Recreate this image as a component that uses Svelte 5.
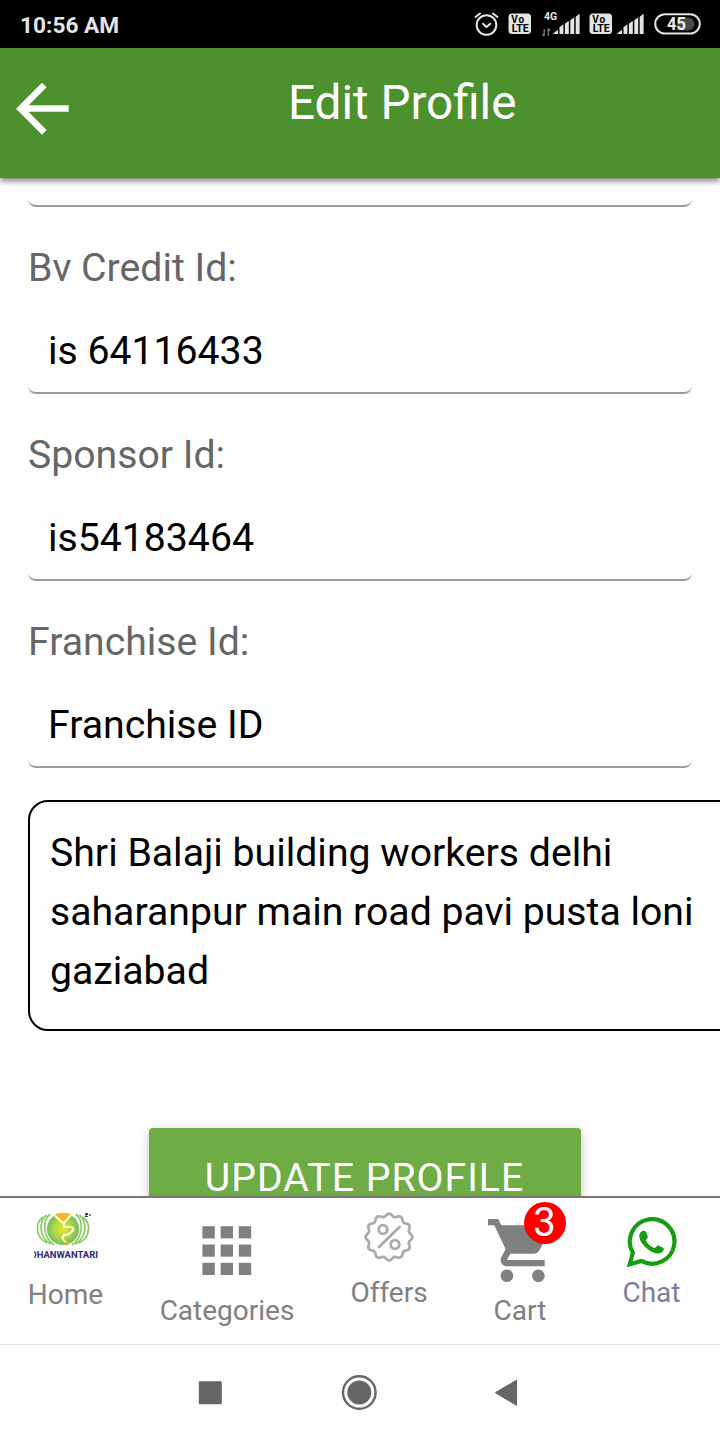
<script>
  let fields = $state([
    { label: 'Bv Credit Id:', value: 'is 64116433' },
    { label: 'Sponsor Id:', value: 'is54183464' },
    { label: 'Franchise Id:', value: 'Franchise ID' },
  ]);

  const address = 'Shri Balaji building workers delhi saharanpur main road pavi pusta loni gaziabad';
  const cartCount = 3;
  const bars = [4, 7.5, 11, 14.5, 18];

  // Wavy outline of the offers badge, twelve lobes
  const badgePath = () => {
    let d = '';
    for (let i = 0; i <= 144; i++) {
      const angle = (i / 144) * Math.PI * 2;
      const r = 22 + 1.4 * Math.cos(12 * angle);
      const x = 25 + r * Math.sin(angle);
      const y = 25 - r * Math.cos(angle);
      d += `${i ? 'L' : 'M'}${x.toFixed(2)} ${y.toFixed(2)}`;
    }
    return d + 'Z';
  };
</script>

{#snippet volte()}
  <svg class="volte" width="24" height="22" viewBox="0 0 24 22">
    <rect x="0.5" y="0.5" width="22.5" height="20.5" rx="3.5" fill="#e4e4e4" />
    <text x="3.2" y="9.7" font-size="10" textLength="13">Vo</text>
    <text x="3.8" y="18.8" font-size="10" textLength="17" lengthAdjust="spacingAndGlyphs">LTE</text>
  </svg>
{/snippet}

{#snippet signal()}
  <svg width="29" height="21" viewBox="0 0 29 21">
    <path d="M0.5 20L6 15.8V20Z" fill="#e4e4e4" />
    {#each bars.slice(1) as h, i}
      <path d="M{7.5 + i * 5.4} {20 - h + 0.8}L{11.4 + i * 5.4} {17.8 - h}V20H{7.5 + i * 5.4}Z" fill="#e4e4e4" />
    {/each}
  </svg>
{/snippet}

<div class="screen">
  <div class="status">
    <span class="time">10:56 AM</span>
    <div class="status-icons">
      <svg width="26" height="26" viewBox="0 0 26 26" fill="none" stroke="#e4e4e4" stroke-width="2" stroke-linecap="round" stroke-linejoin="round">
        <circle cx="12.5" cy="14" r="9.8" />
        <path d="M1.5 6L6 2.500M23.500 6L19 2.500M9 12.700L12.500 15.900L16.300 12.700" />
      </svg>
      {@render volte()}
      <div class="network">
        <svg class="data" width="20" height="28" viewBox="0 0 20 28">
          <text x="2" y="9.5" font-size="10.5" fill="#e4e4e4">4G</text>
          <path d="M2.2 19V25.5M0.5 24L2.2 26M6.4 26V18.5M8 20.5L6.4 18.5" stroke="#777" stroke-width="1.4" fill="none" />
        </svg>
        {@render signal()}
      </div>
      {@render volte()}
      <div class="second">{@render signal()}</div>
      <svg class="battery" width="48" height="24" viewBox="0 0 48 24">
        <path d="M23 5.500H34A6.500 6.500 0 0 1 34 18.500H23Z" fill="#4a4a4a" />
        <rect x="1.200" y="2.200" width="44.600" height="19.400" rx="9.700" fill="none" stroke="#e4e4e4" stroke-width="2" />
        <text x="13" y="18" font-size="17.500" fill="#eee" textLength="19" lengthAdjust="spacingAndGlyphs">45</text>
      </svg>
    </div>
  </div>

  <header>
    <button class="back" aria-label="Back">
      <svg width="54" height="54" viewBox="0 0 54 54" fill="none" stroke="#fff" stroke-width="6.6">
        <path d="M28.3 3L4.6 26.700L28.300 50.400M5 26.500H52.700" />
      </svg>
    </button>
    <h1>Edit Profile</h1>
  </header>

  <main>
    <div class="input previous"></div>
    {#each fields as field}
      <label class="field">
        <span>{field.label}</span>
        <input class="input" type="text" bind:value={field.value} />
      </label>
    {/each}
    <div class="address">{address}</div>
    <button class="update">UPDATE PROFILE</button>
  </main>

  <nav>
    <a class="item home" href="#home">
      <svg width="64" height="54" viewBox="0 0 64 54">
        <defs>
          <radialGradient id="leaf">
            <stop offset="0" stop-color="#e3e52c" />
            <stop offset="0.55" stop-color="#b4d84a" />
            <stop offset="1" stop-color="#6cc05a" />
          </radialGradient>
        </defs>
        <g fill="none" stroke="#8ccb62" stroke-width="1.7">
          <path d="M9 9C1 15 1 29 13 35M12.500 7C4.500 14 5 29 16.500 36M16 6C8 13 9 29 20 37" />
          <path d="M49 9C57 15 57 29 45 35M45.500 7C53.500 14 53 29 41.500 36M42 6C50 13 49 29 38 37" />
        </g>
        <ellipse cx="29" cy="21" rx="16" ry="16" fill="url(#leaf)" />
        <path d="M21 6Q30 3.500 37 6L30 14.500Z" fill="#fbb62d" />
        <path d="M19 6L29.500 15.500L38.500 5.500M30 15.500V19Q41 18 39 22.500Q35 27 30 27Q26 31 33 35" fill="none" stroke="#fbfbd0" stroke-width="2" />
        <circle cx="33" cy="35.500" r="2" fill="#f6ab38" />
        <path d="M51 5.500L54 8.500M54 5.500L51 8.500M52.500 5V9M56 6V8" stroke="#333" stroke-width="1.200" />
        <text x="-3.500" y="49.500" font-size="9.300" font-weight="700" fill="#2f2a7c" textLength="67.500" lengthAdjust="spacingAndGlyphs">DHANWANTARI</text>
      </svg>
      <span>Home</span>
    </a>
    <a class="item categories" href="#categories">
      <svg width="50" height="50" viewBox="0 0 50 50" fill="#808080">
        {#each [0, 1, 2] as row}
          {#each [0, 1, 2] as col}
            <rect x={0.4 + col * 18.2} y={0.2 + row * 18.3} width="12.4" height="12.2" />
          {/each}
        {/each}
      </svg>
      <span>Categories</span>
    </a>
    <a class="item offers" href="#offers">
      <svg width="50" height="50" viewBox="0 0 50 50" fill="none" stroke="#aeaaaa" stroke-width="2.8" stroke-linecap="round">
        <path d={badgePath()} />
        <circle cx="19" cy="17.500" r="4.300" />
        <circle cx="31" cy="32.500" r="4.300" />
        <path d="M35.500 15L15 35" />
      </svg>
      <span>Offers</span>
    </a>
    <a class="item cart" href="#cart">
      <div class="cart-icon">
        <svg width="63" height="63" viewBox="1 2 20 20" fill="#808080">
          <path d="M7 18c-1.100 0-1.990.9-1.990 2S5.900 22 7 22s2-.9 2-2-.9-2-2-2zM1 2v2h2l3.600 7.590-1.350 2.450c-.16.28-.25.61-.25.960 0 1.100.9 2 2 2h12v-2H7.420c-.14 0-.25-.11-.25-.25l.03-.12.9-1.630h7.450c.75 0 1.410-.41 1.750-1.030l3.580-6.490A1.003 1.003 0 0 0 20 4H5.210l-.94-2H1zm16 16c-1.100 0-1.990.9-1.990 2s.89 2 1.990 2 2-.9 2-2-.9-2-2-2z" />
        </svg>
        <b class="count">{cartCount}</b>
      </div>
      <span>Cart</span>
    </a>
    <a class="item chat" href="#chat">
      <svg width="50" height="50" viewBox="0 0 50 50">
        <path d="M2.700 47.300L5.900 35.700A22.300 22.300 0 1 1 14.300 43.900Z" fill="none" stroke="#169c13" stroke-width="4.200" />
        <path d="M13.500 15.500C15.500 13 18.500 13.500 19.300 15.500L20.800 19.500C21.200 21 19 22.500 18.700 23.500C20.500 27 23.500 29.800 27.500 31C29 30.500 30 28.200 31.500 28.500L36 30.700C37.500 31.500 36.500 34 35 35.200C31.500 37.500 27 36.200 23 33.700C18.500 30.800 12.500 25 12.300 19.500C12.300 18 12.500 16.500 13.500 15.500Z" fill="#169c13" />
      </svg>
      <span>Chat</span>
    </a>
  </nav>

  <div class="system">
    <svg width="24" height="24" viewBox="0 0 24 24"><rect x="0.800" y="0.300" width="23" height="23" rx="1.200" fill="#666" /></svg>
    <svg width="36" height="36" viewBox="0 0 36 36">
      <circle cx="18.300" cy="17.500" r="16.300" fill="none" stroke="#666" stroke-width="2.400" />
      <circle cx="18.300" cy="17.500" r="12" fill="#666" />
    </svg>
    <svg width="24" height="28" viewBox="0 0 24 28"><path d="M1 13.700L21.300 1.600V25.800Z" fill="#666" stroke="#666" stroke-width="1.500" stroke-linejoin="round" /></svg>
  </div>
</div>

<style>
  :global(body) {
    margin: 0;
    background: #fefefe;
  }

  .screen {
    display: flex;
    flex-direction: column;
    width: 720px;
    height: 1440px;
    overflow: hidden;
    font-family: Roboto, sans-serif;
    background: #fefefe;
  }

  svg {
    display: block;
    flex: none;
  }

  button {
    padding: 0;
    border: 0;
    background: none;
    font-family: inherit;
  }

  .status {
    display: flex;
    flex: none;
    align-items: center;
    justify-content: space-between;
    height: 48px;
    padding: 0 18px 0 20px;
    box-sizing: border-box;
    background: #000;
    color: #e4e4e4;
  }

  .time {
    padding-top: 2px;
    font-size: 22.7px;
    font-weight: 700;
  }

  .status-icons {
    display: flex;
    align-items: center;
  }

  .status-icons text {
    font-weight: 700;
  }

  .volte {
    margin-left: 8px;
  }

  .network {
    display: flex;
    align-items: center;
    margin-left: 10px;
  }

  .data {
    margin-right: -10px;
  }

  .second {
    margin-left: 3px;
  }

  .battery {
    margin-left: 9px;
  }

  header {
    display: flex;
    flex: none;
    z-index: 1;
    height: 130px;
    background: #4c912e;
    box-shadow: 0 3px 6px rgba(0, 0, 0, 0.5);
  }

  .back {
    width: 54px;
    height: 54px;
    margin: 34px 218px 0 16px;
  }

  h1 {
    margin: 27px 0 0;
    color: #fff;
    font-size: 47.6px;
    font-weight: 400;
    line-height: 56px;
  }

  main {
    display: flex;
    flex: 1;
    flex-direction: column;
    min-height: 0;
    padding: 0 28px;
    overflow: hidden;
  }

  .input {
    display: block;
    flex: none;
    width: 100%;
    height: 96px;
    padding: 23px 20px 11px;
    border: 0 solid #9b9b9b;
    border-bottom-width: 2px;
    border-radius: 8px;
    box-sizing: border-box;
    outline: none;
    background: transparent;
    color: #000;
    font-family: inherit;
    font-size: 39.2px;
  }

  .previous {
    height: 29px;
    padding: 0;
  }

  .field {
    display: block;
    flex: none;
    padding-top: 31px;
  }

  .field span {
    display: block;
    color: #666;
    font-size: 39.2px;
    line-height: 60px;
  }

  .address {
    flex: none;
    width: 720px;
    height: 231px;
    margin-top: 32px;
    padding: 22px 50px 0 20px;
    border: 2px solid #000;
    border-radius: 20px;
    box-sizing: border-box;
    font-size: 39.2px;
    line-height: 59px;
  }

  .update {
    flex: none;
    width: 432px;
    height: 98px;
    margin: 97px 0 0 121px;
    padding: 2px 1px 0 0;
    border-radius: 4px;
    background: #6fac45;
    box-shadow: 0 3px 8px rgba(0, 0, 0, 0.25);
    color: #fff;
    font-size: 39.2px;
    letter-spacing: 1px;
  }

  nav {
    display: grid;
    flex: none;
    grid-template-columns: 131px 192px 132px 130px 133px;
    height: 148px;
    border-top: 2px solid #777;
    box-sizing: border-box;
  }

  .item {
    display: flex;
    flex-direction: column;
    align-items: center;
    justify-content: space-between;
    color: #808080;
    font-size: 28px;
    line-height: 32px;
    text-decoration: none;
  }

  .home {
    padding: 10px 0 33px;
  }

  .categories {
    padding: 28px 0 17px;
  }

  .offers {
    padding: 14px 0 35px;
  }

  .cart {
    padding: 21px 0 17px;
  }

  .chat {
    padding: 19px 0 35px;
    color: #7f7c9f;
  }

  .cart-icon {
    position: relative;
    margin-right: 2px;
  }

  .count {
    position: absolute;
    top: -17px;
    left: 36px;
    width: 42px;
    height: 42px;
    border-radius: 50%;
    background: #f00;
    color: #fff;
    font-size: 40px;
    font-weight: 400;
    line-height: 41px;
    text-align: center;
  }

  .system {
    display: flex;
    flex: none;
    align-items: center;
    justify-content: space-between;
    height: 96px;
    padding: 0 201px 0 198px;
    border-top: 1px solid #e2e2e2;
    box-sizing: border-box;
  }
</style>
